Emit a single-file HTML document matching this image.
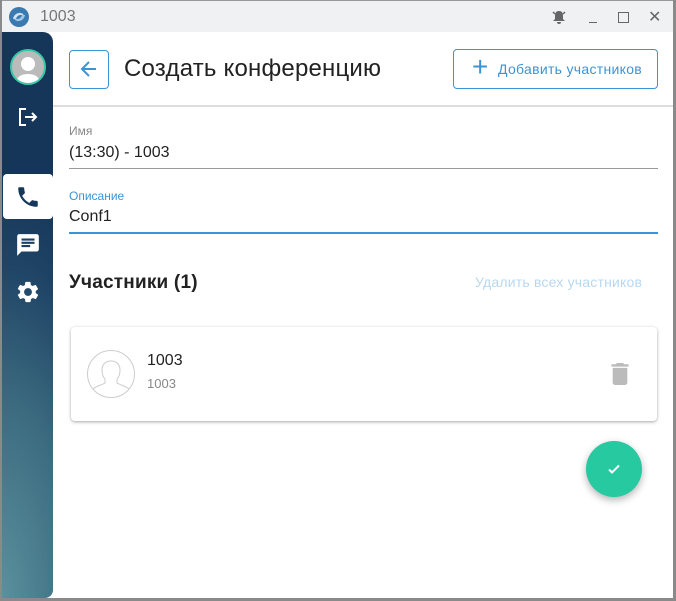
<!DOCTYPE html>
<html><head><meta charset="utf-8"><style>
*{box-sizing:border-box;margin:0;padding:0}
body{width:676px;height:601px;overflow:hidden;background:#8a8a8a;font-family:"Liberation Sans",Roboto,sans-serif;position:relative}
.win{position:absolute;left:2px;top:0;width:671px;height:598px;background:#fff}
.title{position:absolute;left:0;top:0;width:671px;height:32px;background:#f0f1f3;border-top:1px solid #999}
.title .t{position:absolute;left:38px;top:7px;font-size:16px;color:#777}
.side{position:absolute;left:0;top:32px;width:51px;height:566px;border-radius:0 10px 8px 0;background:radial-gradient(ellipse 160px 420px at 0% 100%,#5a919e 0%,#3d6c80 45%,#1f4466 80%,#163659 100%)}
.abs{position:absolute}
</style></head><body>
<div class="win">
<div class="title">
<svg class="abs" style="left:6px;top:5px" width="22" height="22" viewBox="0 0 22 22"><circle cx="11" cy="11" r="10" fill="#3a7ab0"/><path d="M5 13 C6 6 15 5 16 10 C13 8 9 9 8 13 Z" fill="#cfe4f2"/><path d="M17 9 C16 16 7 17 6 12 C9 14 13 13 14 9Z" fill="#9cc6e4"/></svg>
<div class="t">1003</div>
<svg class="abs" style="left:549px;top:8px" width="16" height="16" viewBox="0 0 16 16"><path d="M8 2c-3 0-4 2-4 5v3l-2 2h12l-2-2V7c0-3-1-5-4-5z M6 13h4a2 2 0 0 1-4 0z" fill="#666"/><path d="M2 3l2 2M14 3l-2 2" stroke="#666" stroke-width="1.5"/></svg>
<div class="abs" style="left:587px;top:21px;width:8px;height:1px;background:#666"></div>
<div class="abs" style="left:616px;top:11px;width:11px;height:11px;border:1.5px solid #666"></div>
<div class="abs" style="left:646px;top:6px;font-size:16px;color:#666">✕</div>
</div>
<div class="side">
<div class="abs" style="left:8px;top:17px;width:36px;height:36px;border-radius:50%;background:#bbb;border:2px solid #3bc9a5;overflow:hidden"><svg width="36" height="36" viewBox="0 0 36 36"><circle cx="16" cy="13" r="7" fill="#fff"/><path d="M3 34c1-8 6-11 13-11s12 3 13 11z" fill="#fff"/></svg></div>
<svg class="abs" style="left:14px;top:73px" width="24" height="24" viewBox="0 0 24 24"><path d="M10 4H4v16h6" stroke="#fff" stroke-width="2" fill="none"/><path d="M9 12h11M16 8l4 4-4 4" stroke="#fff" stroke-width="2" fill="none"/></svg>
<div class="abs" style="left:1px;top:142px;width:50px;height:45px;background:#fff;border-radius:4px"></div>
<svg class="abs" style="left:13px;top:152px" width="26" height="26" viewBox="0 0 24 24"><path d="M6.6 10.8c1.4 2.8 3.8 5.1 6.6 6.6l2.2-2.2c.3-.3.7-.4 1-.2 1.1.4 2.3.6 3.6.6.6 0 1 .4 1 1V20c0 .6-.4 1-1 1C10.6 21 3 13.4 3 4c0-.6.4-1 1-1h3.5c.6 0 1 .4 1 1 0 1.3.2 2.5.6 3.6.1.3 0 .7-.2 1L6.6 10.8z" fill="#16375a"/></svg>
<svg class="abs" style="left:13px;top:200px" width="26" height="26" viewBox="0 0 24 24"><path d="M20 2H4c-1.1 0-2 .9-2 2v18l4-4h14c1.1 0 2-.9 2-2V4c0-1.1-.9-2-2-2zM6 9h12v2H6zm8 5H6v-2h8zm4-6H6V6h12z" fill="#fff"/></svg>
<svg class="abs" style="left:13px;top:247px" width="26" height="26" viewBox="0 0 24 24"><path d="M19.1 12.9c.04-.3.06-.6.06-.9s-.02-.6-.07-.9l2-1.5c.2-.1.2-.4.1-.6l-1.9-3.3c-.1-.2-.4-.3-.6-.2l-2.4 1c-.5-.4-1-.7-1.600-.9l-.4-2.5c0-.3-.2-.4-.5-.4h-3.8c-.2 0-.4.2-.5.4l-.4 2.5c-.6.2-1.1.6-1.6.9l-2.4-1c-.2-.1-.5 0-.6.2L2.7 8.8c-.1.2-.1.5.1.6l2 1.6c0 .3-.1.6-.1.9s0 .6.1.9l-2 1.6c-.2.1-.2.4-.1.6l1.9 3.3c.1.2.4.3.6.2l2.4-1c.5.4 1 .7 1.6.9l.4 2.5c0 .2.2.4.5.4h3.8c.2 0 .4-.2.5-.4l.4-2.5c.6-.2 1.1-.6 1.6-.9l2.4 1c.2.1.5 0 .6-.2l1.9-3.3c.1-.2.1-.5-.1-.6zM12 15.6c-2 0-3.6-1.6-3.6-3.6S10 8.4 12 8.4s3.6 1.6 3.6 3.6-1.6 3.6-3.6 3.6z" fill="#fff"/></svg>
</div>
<div class="abs" style="left:67px;top:50px;width:40px;height:39px;border:1px solid #3b94d6;border-radius:4px"></div>
<svg class="abs" style="left:77px;top:59px" width="20" height="20" viewBox="0 0 20 20"><path d="M17 10H4M10 3l-7 7 7 7" stroke="#3b94d6" stroke-width="2" fill="none"/></svg>
<div class="abs" style="left:122px;top:55px;font-size:24px;color:#222;letter-spacing:.2px">Создать конференцию</div>
<div class="abs" style="left:451px;top:49px;width:205px;height:40px;border:1px solid #3b94d6;border-radius:4px"></div>
<div class="abs" style="left:470px;top:53px;font-size:28px;color:#3b94d6;font-weight:300;line-height:28px">+</div>
<div class="abs" style="left:496px;top:61px;font-size:14px;color:#3b94d6;letter-spacing:.3px">Добавить участников</div>
<div class="abs" style="left:51px;top:105px;width:620px;height:2px;background:#ddd"></div>
<div class="abs" style="left:67px;top:124px;font-size:12px;color:#888">Имя</div>
<div class="abs" style="left:67px;top:144px;font-size:16px;color:#222">(13:30) - 1003</div>
<div class="abs" style="left:67px;top:168px;width:589px;height:1px;background:#999"></div>
<div class="abs" style="left:67px;top:189px;font-size:12px;color:#3b94d6">Описание</div>
<div class="abs" style="left:67px;top:208px;font-size:16px;color:#222">Conf1</div>
<div class="abs" style="left:67px;top:232px;width:589px;height:2px;background:#3b94d6"></div>
<div class="abs" style="left:67px;top:272px;font-size:19px;color:#222;font-weight:bold;letter-spacing:.2px">Участники (1)</div>
<div class="abs" style="left:473px;top:274px;font-size:14px;color:#b8d8f0;letter-spacing:.2px">Удалить всех участников</div>
<div class="abs" style="left:69px;top:327px;width:586px;height:94px;background:#fff;border-radius:4px;box-shadow:0 1px 3px rgba(0,0,0,.35)"></div>
<svg class="abs" style="left:85px;top:350px" width="48" height="48" viewBox="0 0 48 48"><circle cx="24" cy="24" r="23.5" fill="none" stroke="#ccc"/><path d="M6 39c3-3 9-4 12-6v-4c-2-2-3-5-3-9 0-6 4-9 9-9s9 3 9 9c0 4-1 7-3 9v4c3 2 9 3 12 6" fill="none" stroke="#ccc"/></svg>
<div class="abs" style="left:145px;top:352px;font-size:16px;color:#222">1003</div>
<div class="abs" style="left:145px;top:376px;font-size:13px;color:#888">1003</div>
<svg class="abs" style="left:609px;top:363px" width="18" height="22" viewBox="0 0 14 18"><path d="M1 16c0 1.1.9 2 2 2h8c1.1 0 2-.9 2-2V4H1zM14 1h-3.5l-1-1h-5l-1 1H0v2h14z" fill="#bbb"/></svg>
<div class="abs" style="left:584px;top:441px;width:56px;height:56px;border-radius:50%;background:#26c9a0;box-shadow:0 3px 8px rgba(0,0,0,.3)"></div>
<svg class="abs" style="left:604px;top:461px" width="16" height="16" viewBox="0 0 16 16"><path d="M3 8.5l3 3 7-7" stroke="#fff" stroke-width="2" fill="none"/></svg>
</div>
</body></html>
